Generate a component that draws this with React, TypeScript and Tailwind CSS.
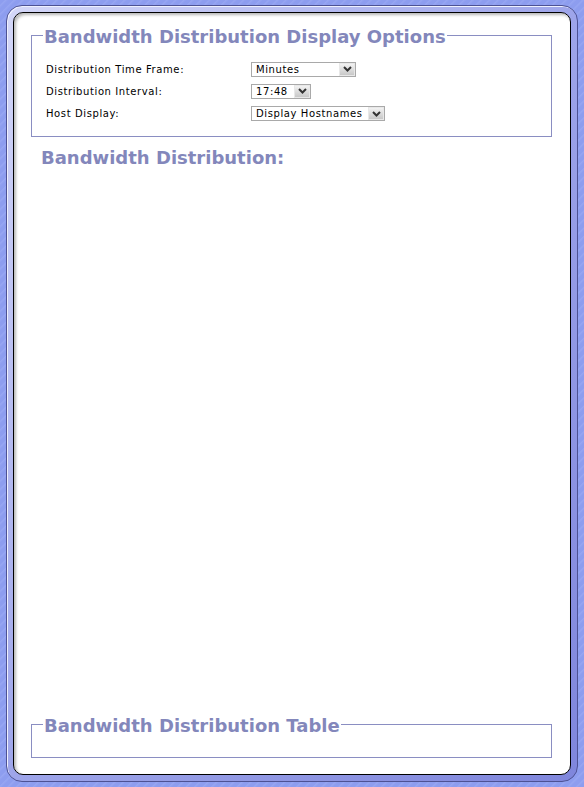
const Select = ({ value, width }: { value: string; width: string }) => (
	<div className={`flex h-[15px] items-stretch border border-[#a9a9a9] bg-white ${width}`}>
		<span className="flex-1 pl-[4px] text-[10px] leading-[13px] tracking-[0.6px] text-black">{value}</span>
		<span className="flex w-[16px] items-center justify-center border border-[#e8e8e8] bg-gradient-to-b from-[#f2f2f2] to-[#c8c8c8]">
			<svg width="9" height="6" viewBox="0 0 9 6">
				<path d="M1 1 L4.5 4.5 L8 1" stroke="#333" strokeWidth="2" fill="none" />
			</svg>
		</span>
	</div>
)

const rows = [
	{ label: "Distribution Time Frame:", value: "Minutes", width: "w-[105px]", h: "h-[22px]" },
	{ label: "Distribution Interval:", value: "17:48", width: "w-[60px]", h: "h-[22px]" },
	{ label: "Host Display:", value: "Display Hostnames", width: "w-[134px]", h: "h-[23px]" },
]

export default function App() {
	return (
		<div className="h-[787px] w-[584px] bg-[#8c9cec] bg-[repeating-linear-gradient(135deg,#8d9def_0px,#8d9def_3px,#97a6f2_4px,#8d9def_6px)] px-[6px] pt-[5px] pb-[5px] font-['DejaVu_Sans',Verdana,sans-serif]">
			<div className="h-full rounded-[16px] border border-[#4d5294] bg-gradient-to-br from-[#d4d7f8] via-[#9ea5ea] to-[#7f86dc] p-[6px] shadow-[inset_1px_1px_0_#eef0ff]">
				<div className="flex h-full flex-col rounded-[10px] border border-black bg-white shadow-[inset_2px_2px_3px_rgba(0,0,0,0.28)]">
					<fieldset className="mt-[11px] ml-[17px] mr-[18px] border border-[#8a8ec2] px-[14px] pt-[12px] pb-[11px]">
						<legend className="-ml-[3px] px-[1px] text-[18px] font-bold leading-[22px] text-[#8387bb]">
							<span className="inline-block translate-y-[2px]">Bandwidth Distribution Display Options</span>
						</legend>
						{rows.map((r) => (
							<div key={r.label} className={`flex items-center ${r.h}`}>
								<span className="w-[205px] text-[10px] tracking-[0.6px] text-black">{r.label}</span>
								<Select value={r.value} width={r.width} />
							</div>
						))}
					</fieldset>
					<h2 className="mt-[10px] ml-[27px] text-[18px] font-bold leading-[22px] text-[#8387bb]">
						Bandwidth Distribution:
					</h2>
					<div className="flex-1" />
					<fieldset className="mb-[16px] ml-[17px] mr-[18px] h-[45px] border border-[#8a8ec2]">
						<legend className="ml-[11px] px-[1px] text-[18px] font-bold leading-[22px] text-[#8387bb]">
							<span className="inline-block translate-y-[2px]">Bandwidth Distribution Table</span>
						</legend>
					</fieldset>
				</div>
			</div>
		</div>
	)
}
